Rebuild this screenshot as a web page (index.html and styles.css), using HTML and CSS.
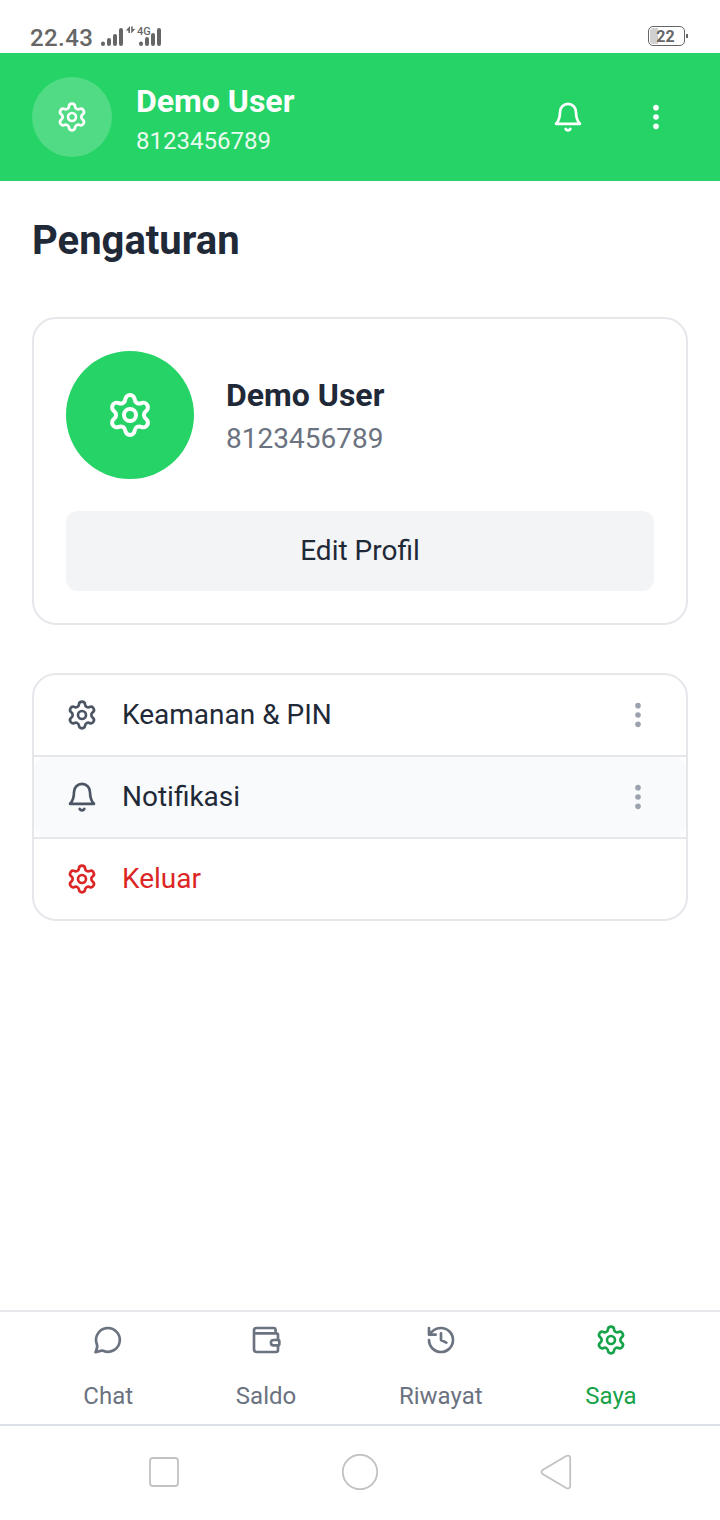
FILE: index.html
```html
<!DOCTYPE html>
<html lang="id">
<head>
<meta charset="utf-8">
<title>Pengaturan</title>
<link rel="stylesheet" href="styles.css">
</head>
<body>
<svg class="defs" aria-hidden="true">
  <symbol id="gear" viewBox="0 0 24 24"><path d="M9.671 4.136a2.34 2.34 0 0 1 4.659 0 2.34 2.34 0 0 0 3.319 1.915 2.34 2.34 0 0 1 2.33 4.033 2.34 2.34 0 0 0 0 3.831 2.34 2.34 0 0 1-2.33 4.033 2.34 2.34 0 0 0-3.319 1.915 2.34 2.34 0 0 1-4.659 0 2.34 2.34 0 0 0-3.32-1.915 2.34 2.34 0 0 1-2.33-4.033 2.34 2.34 0 0 0 0-3.831A2.34 2.34 0 0 1 6.35 6.051a2.34 2.34 0 0 0 3.319-1.915"/><circle cx="12" cy="12" r="3"/></symbol>
  <symbol id="bell" viewBox="0 0 24 24"><path d="M18 8.200A6 6 0 0 0 6 8.200c0 6-3 8.900-3 8.900h18s-3-2.900-3-8.900M13.730 21a2 2 0 0 1-3.460 0"/></symbol>
  <symbol id="dots" viewBox="0 0 24 24"><g fill="currentColor" stroke="none"><circle cx="12" cy="5" r="2.1"/><circle cx="12" cy="12" r="2.1"/><circle cx="12" cy="19" r="2.1"/></g></symbol>
</svg>

<div class="status">
  <div class="status-left">
    <span class="clock">22.43</span>
    <svg class="signal" width="62" height="24" viewBox="100 24 62 24">
      <g stroke="#666" stroke-width="4" stroke-linecap="round">
        <path d="M103 43.500v.5M109 40v4M115 36v8M121 30v14M141 43.500v.5M147 39v5M153 35v9M159 30v14"/>
      </g>
      <path d="M130 26v7h-1.600v-2.500h-2.600zM131.200 33.500v-7h1.600v2.500h2.400z" fill="#666"/>
      <text x="137" y="34.500" class="net">4G</text>
    </svg>
  </div>
  <div class="battery"><span class="charge"></span><b>22</b></div>
</div>

<header class="header">
  <div class="avatar small"><svg class="icon"><use href="#gear"/></svg></div>
  <div class="who">
    <div class="name">Demo User</div>
    <div class="phone">8123456789</div>
  </div>
  <div class="actions">
    <svg class="icon"><use href="#bell"/></svg>
    <svg class="icon"><use href="#dots"/></svg>
  </div>
</header>

<main class="main">
  <h1 class="title">Pengaturan</h1>
  <section class="card profile">
    <div class="profile-row">
      <div class="avatar large"><svg class="icon big"><use href="#gear"/></svg></div>
      <div class="profile-text">
        <div class="name">Demo User</div>
        <div class="profile-phone">8123456789</div>
      </div>
    </div>
    <button class="edit">Edit Profil</button>
  </section>
  <ul class="card list">
    <li class="item"><div class="row"><svg class="icon lead"><use href="#gear"/></svg><span class="label">Keamanan &amp; PIN</span><svg class="icon more"><use href="#dots"/></svg></div></li>
    <li class="item"><div class="row active"><svg class="icon lead"><use href="#bell"/></svg><span class="label">Notifikasi</span><svg class="icon more"><use href="#dots"/></svg></div></li>
    <li class="item"><div class="row danger"><svg class="icon"><use href="#gear"/></svg><span class="label">Keluar</span></div></li>
  </ul>
</main>

<nav class="tabs">
  <a class="tab"><svg class="icon" viewBox="0 0 24 24"><path d="M2.600 21.200C3.500 19.200 4.500 17.600 3.700 15.300A8.900 8.900 0 1 1 8.400 20.100C6.600 19.600 4.800 20.800 2.600 21.200Z"/></svg><span>Chat</span></a>
  <a class="tab"><svg class="icon" viewBox="0 0 24 24"><path d="M19.200 7V4.500A1.500 1.500 0 0 0 17.700 3H5A2 2 0 0 0 3 5V19A2 2 0 0 0 5 21H19.500A1.500 1.500 0 0 0 21 19.500V16M21 12V8.500A1.500 1.500 0 0 0 19.500 7H3"/><path d="M17.700 12H21a1 1 0 0 1 1 1v2a1 1 0 0 1-1 1h-3.300a2 2 0 0 1 0-4z"/></svg><span>Saldo</span></a>
  <a class="tab"><svg class="icon" viewBox="0 0 24 24"><path d="M3 12a9 9 0 1 0 9-9 9.750 9.750 0 0 0-6.740 2.740L3 8M3 3v5h5M12 7v5l4 2"/></svg><span>Riwayat</span></a>
  <a class="tab current"><svg class="icon"><use href="#gear"/></svg><span>Saya</span></a>
</nav>

<div class="system">
  <svg width="36" height="36" viewBox="0 0 36 36"><rect x="4" y="4" width="28" height="28" rx="3"/></svg>
  <svg width="36" height="36" viewBox="0 0 36 36"><circle cx="18" cy="18" r="17.200"/></svg>
  <svg width="36" height="36" viewBox="0 0 36 36"><path d="M5 15.700 28.200 2Q32 .4 32.200 4.200V31.800Q32 35.600 28.200 34L5 20.300Q2 18 5 15.700Z"/></svg>
</div>
</body>
</html>
```

FILE: styles.css
```css
* { box-sizing: border-box; }

body {
  margin: 0;
  height: 1520px;
  display: flex;
  flex-direction: column;
  background: #fff;
  color: #1f2937;
  font-family: Roboto, "Noto Sans", sans-serif;
}

.defs { display: none; }

.icon {
  width: 32px;
  height: 32px;
  flex: none;
  fill: none;
  stroke: currentColor;
  stroke-width: 2;
  stroke-linecap: round;
  stroke-linejoin: round;
}
.icon.big { width: 48px; height: 48px; }

.status {
  height: 53px;
  padding: 24px 32px 0 30px;
  display: flex;
  justify-content: space-between;
  align-items: flex-start;
  color: #666;
}
.status-left { display: flex; gap: 8px; }
.clock {
  width: 62px;
  font-size: 24px;
  line-height: 28px;
  font-weight: 500;
  letter-spacing: 0.4px;
}
.net { font-size: 11px; font-weight: 500; fill: #666; }
.battery {
  position: relative;
  width: 37px;
  height: 20px;
  margin: 2px 3px 0 0;
  border: 1.5px solid #666;
  border-radius: 5px;
  text-align: center;
  font-size: 16px;
  line-height: 20px;
}
.battery b { position: relative; left: -1px; }
.battery::after {
  content: "";
  position: absolute;
  right: -4px;
  top: 7px;
  width: 2px;
  height: 4px;
  background: #666;
}
.charge {
  position: absolute;
  left: 1px;
  top: 1px;
  bottom: 1px;
  width: 8px;
  border-radius: 3px 0 0 3px;
  background: #d0d0d0;
}

.header {
  height: 128px;
  padding: 0 32px;
  display: flex;
  align-items: center;
  gap: 24px;
  background: #25d366;
  color: #fff;
}
.avatar {
  flex: none;
  border-radius: 50%;
  display: flex;
  align-items: center;
  justify-content: center;
  color: #fff;
}
.small { width: 80px; height: 80px; background: rgba(255, 255, 255, 0.2); }
.large { width: 128px; height: 128px; background: #25d366; }
.who { flex: 1; }
.name { font-size: 32px; line-height: 48px; font-weight: 700; }
.phone { font-size: 24px; line-height: 32px; opacity: 0.9; }
.actions { display: flex; gap: 56px; padding-right: 16px; }

.main { flex: 1; padding: 32px; }
.title { margin: 0 0 48px; font-size: 40px; line-height: 56px; font-weight: 700; }
.card { border: 2px solid #e5e7eb; border-radius: 24px; }
.profile { padding: 32px; margin-bottom: 48px; }
.profile-row { display: flex; align-items: center; gap: 32px; margin-bottom: 32px; }
.profile-phone { font-size: 28px; line-height: 40px; color: #6b7280; }
.edit {
  display: block;
  width: 100%;
  height: 80px;
  border: 0;
  border-radius: 12px;
  background: #f3f4f6;
  color: #1f2937;
  font: 400 28px/40px Roboto, "Noto Sans", sans-serif;
}
.list { margin: 0; padding: 0; list-style: none; }
.item + .item { border-top: 2px solid #e5e7eb; }
.row {
  height: 80px;
  padding: 0 32px;
  display: flex;
  align-items: center;
  gap: 24px;
  font-size: 28px;
  line-height: 40px;
}
.label { flex: 1; }
.lead { color: #4b5563; }
.more { color: #9ca3af; }
.active { background: #f9fafb; border-radius: 12px; }
.danger { color: #dc2626; }

.tabs {
  height: 116px;
  padding: 12px 32px 0;
  display: flex;
  justify-content: space-around;
  border-top: 2px solid #e5e7eb;
  border-bottom: 2px solid #dce1e8;
  color: #6b7280;
  font-size: 24px;
  line-height: 32px;
}
.tab { display: flex; flex-direction: column; align-items: center; gap: 24px; }
.current { color: #16a34a; }

.system {
  height: 94px;
  padding: 0 146px 2px;
  display: flex;
  align-items: center;
  justify-content: space-between;
}
.system svg { fill: none; stroke: #c2c2c2; stroke-width: 1.8; }
```
